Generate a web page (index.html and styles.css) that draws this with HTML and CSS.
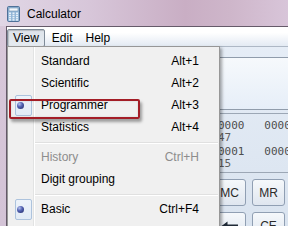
FILE: index.html
```html
<!DOCTYPE html>
<html>
<head>
<meta charset="utf-8">
<title>Calculator</title>
<link rel="stylesheet" href="styles.css">
</head>
<body>
<div class="window">
  <div class="titlebar">
    <svg class="app-icon" width="13" height="16" viewBox="0 0 13 16">
      <rect x="0.5" y="0.5" width="12" height="15" rx="1.2" fill="#93b7d8" stroke="#4f7198"/>
      <rect x="2" y="2" width="9" height="3" fill="#f2f7fc" stroke="#6f8fb0" stroke-width="0.6"/>
      <g fill="#e6f0f9">
        <rect x="2" y="6.5" width="2" height="1.5"/><rect x="5.5" y="6.5" width="2" height="1.5"/><rect x="9" y="6.5" width="2" height="1.5"/>
        <rect x="2" y="8.7" width="2" height="1.5"/><rect x="5.5" y="8.7" width="2" height="1.5"/><rect x="9" y="8.7" width="2" height="1.5"/>
        <rect x="2" y="10.9" width="2" height="1.5"/><rect x="5.5" y="10.9" width="2" height="1.5"/><rect x="9" y="10.9" width="2" height="1.5"/>
        <rect x="2" y="13.1" width="2" height="1.5"/><rect x="5.5" y="13.1" width="2" height="1.5"/><rect x="9" y="13.1" width="2" height="1.5"/>
      </g>
    </svg>
    <span class="title">Calculator</span>
  </div>
  <div class="frame">
    <div class="frame-edge"></div>
    <div class="client">
      <div class="menubar">
        <span class="menubar-item open">View</span>
        <span class="menubar-item">Edit</span>
        <span class="menubar-item">Help</span>
      </div>
      <div class="calc">
        <div class="display"></div>
        <div class="bits">
          <div class="bit-row">0000   0000</div>
          <div class="bit-label">47</div>
          <div class="bit-row second">0001   0000</div>
          <div class="bit-label">15</div>
        </div>
        <div class="keys">
          <button class="key">MC</button>
          <button class="key">MR</button>
          <button class="key"><svg width="18" height="10" viewBox="0 0 18 10"><path d="M0.5 5 L6.5 0.5 L6.5 3.5 L17 3.5 L17 6.5 L6.5 6.5 L6.5 9.5 Z" fill="#1f2a36"/></svg></button>
          <button class="key">CE</button>
        </div>
      </div>
    </div>
  </div>

  <div class="menu">
    <div class="menu-item"><span class="check"></span><span class="label">Standard</span><span class="accel">Alt+1</span></div>
    <div class="menu-item"><span class="check"></span><span class="label">Scientific</span><span class="accel">Alt+2</span></div>
    <div class="menu-item checked"><span class="check"><span class="check-box"><span class="bullet"></span></span></span><span class="label">Programmer</span><span class="accel">Alt+3</span></div>
    <div class="menu-item"><span class="check"></span><span class="label">Statistics</span><span class="accel">Alt+4</span></div>
    <div class="menu-sep"></div>
    <div class="menu-item disabled"><span class="check"></span><span class="label">History</span><span class="accel">Ctrl+H</span></div>
    <div class="menu-item"><span class="check"></span><span class="label">Digit grouping</span><span class="accel"></span></div>
    <div class="menu-sep"></div>
    <div class="menu-item checked"><span class="check"><span class="check-box"><span class="bullet"></span></span></span><span class="label">Basic</span><span class="accel">Ctrl+F4</span></div>
    <div class="menu-item"><span class="check"></span><span class="label">Unit conversion</span><span class="accel">Ctrl+U</span></div>
  </div>

  <div class="callout"></div>
</div>
</body>
</html>
```

FILE: styles.css
```css
html, body {
  margin: 0;
  padding: 0;
}

body {
  width: 288px;
  height: 226px;
  overflow: hidden;
  font-family: "Liberation Sans", Arial, sans-serif;
  font-size: 12px;
  color: #000;
}

.window {
  position: relative;
  width: 288px;
  height: 226px;
  overflow: hidden;
  display: flex;
  flex-direction: column;
  background: #d9cbdc;
}

.titlebar {
  height: 26px;
  flex: none;
  display: flex;
  align-items: center;
  padding: 1px 0 0 7px;
  box-sizing: border-box;
  background: linear-gradient(to right, #e0d6e5 0, #d7c6d9 90px, #c9aec4 185px, #ceb6ca 230px, #d8c5d9 288px);
}

.app-icon {
  flex: none;
  display: block;
}

.title {
  margin-left: 7px;
  line-height: 16px;
}

.frame {
  flex: 1;
  display: flex;
  min-height: 0;
}

.frame-edge {
  width: 6px;
  flex: none;
  background: linear-gradient(#d8c8da, #d3c3d6);
}

.client {
  flex: 1;
  min-width: 0;
  border-top: 1px solid #655a69;
  border-left: 1px solid #655a69;
  display: flex;
  flex-direction: column;
  background: linear-gradient(#e7eef7, #d9e3ef);
}

.menubar {
  height: 17px;
  flex: none;
  border-bottom: 1px solid #aeb8c5;
  display: flex;
  gap: 1px;
  align-items: flex-start;
  padding-top: 2px;
  background: linear-gradient(#ffffff 0, #ffffff 30%, #e3eaf3 100%);
}

.menubar-item {
  line-height: 16px;
  padding: 0 5px;
  border: 1px solid transparent;
  border-radius: 2px;
}

.menubar-item.open {
  border-color: #7f8b98;
  background: linear-gradient(#dde3ea, #e6ebf1);
  box-shadow: inset 1px 1px 1px rgba(0, 0, 0, 0.18);
}

.calc {
  flex: 1;
  min-height: 0;
  overflow: hidden;
  padding: 10px 0 0 8px;
}

.display {
  width: 300px;
  height: 53px;
  box-sizing: border-box;
  border: 1px solid #909cab;
  background: linear-gradient(#f6f9fc, #e6eef8);
}

.bits {
  width: 300px;
  margin-top: 3px;
  box-sizing: border-box;
  border: 1px solid #9ca7b5;
  padding: 6px 0 2px 202px;
  font-family: "DejaVu Sans Mono", monospace;
  font-size: 11px;
  color: #4e4e4e;
}

.bit-row,
.bit-label {
  line-height: 12px;
  height: 12px;
  white-space: pre;
}

.bit-label {
  color: #5e5e5e;
}

.bit-row.second {
  margin-top: 2px;
}

.keys {
  margin: 6px 0 0 198px;
  display: grid;
  grid-template-columns: repeat(2, 33px);
  grid-auto-rows: 27px;
  gap: 6px;
}

.key {
  margin: 0;
  padding: 0;
  font-family: "Liberation Sans", Arial, sans-serif;
  font-size: 12px;
  color: #2a2a2a;
  border: 1px solid #909fb3;
  border-radius: 3px;
  background: linear-gradient(#f5f8fb, #dfe6ef);
  display: flex;
  align-items: center;
  justify-content: center;
}

.key svg {
  display: block;
}

/* dropdown menu */
.menu {
  position: absolute;
  left: 7px;
  top: 46px;
  width: 213px;
  box-sizing: border-box;
  padding: 3px 0;
  border: 1px solid #979797;
  background-color: #f0f0f0;
  background-image: linear-gradient(to right, transparent 25px, #e2e3e3 25px, #e2e3e3 26px, #ffffff 26px, #ffffff 27px, transparent 27px);
  box-shadow: 2px 2px 3px rgba(0, 0, 0, 0.35);
}

.menu-item {
  display: grid;
  grid-template-columns: 33px 1fr auto;
  align-items: center;
  height: 22px;
  padding-right: 20px;
}

.menu-item.disabled {
  color: #8d8d8d;
}

.check {
  height: 22px;
  display: flex;
  align-items: center;
}

.check-box {
  margin-left: 7px;
  width: 17px;
  height: 21px;
  box-sizing: border-box;
  border: 1px solid #adc3dd;
  border-radius: 2px;
  background: linear-gradient(#edf3fa, #e2ebf6);
  display: flex;
  align-items: center;
}

.bullet {
  margin-left: 1px;
  width: 7px;
  height: 7px;
  border-radius: 50%;
  background: radial-gradient(circle at 35% 30%, #b7c2ee 0, #5464b4 40%, #1c2462 100%);
}

.label {
  white-space: nowrap;
}

.accel {
  text-align: right;
  white-space: nowrap;
}

.menu-sep {
  height: 8px;
  margin: 0 1px 0 27px;
  background: linear-gradient(transparent 4px, #e0e0e0 4px, #e0e0e0 5px, #ffffff 5px, #ffffff 6px, transparent 6px);
}

/* annotation highlight */
.callout {
  position: absolute;
  left: 9px;
  top: 99px;
  width: 131px;
  height: 20px;
  box-sizing: border-box;
  border: 2px solid #a31d26;
  border-radius: 2px;
  box-shadow: 2px 3px 3px rgba(0, 0, 0, 0.35), inset 0 0 2px rgba(0, 0, 0, 0.15);
}
```
